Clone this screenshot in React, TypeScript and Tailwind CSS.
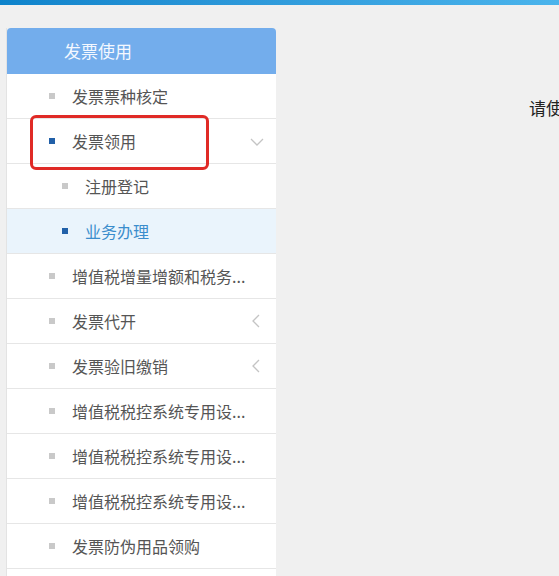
import React from "react";

type Item = {
  label: string;
  sub?: boolean;
  active?: boolean;
  selected?: boolean;
  arrow?: "down" | "left";
};

const items: Item[] = [
  { label: "发票票种核定" },
  { label: "发票领用", active: true, arrow: "down" },
  { label: "注册登记", sub: true },
  { label: "业务办理", sub: true, selected: true },
  { label: "增值税增量增额和税务..." },
  { label: "发票代开", arrow: "left" },
  { label: "发票验旧缴销", arrow: "left" },
  { label: "增值税税控系统专用设..." },
  { label: "增值税税控系统专用设..." },
  { label: "增值税税控系统专用设..." },
  { label: "发票防伪用品领购" },
];

const ChevronDown = () => (
  <svg width="14" height="8" viewBox="0 0 14 8" fill="none">
    <path d="M1 1l6 6 6-6" stroke="#c4c4c4" strokeWidth="1.3" />
  </svg>
);

const ChevronLeft = () => (
  <svg width="8" height="14" viewBox="0 0 8 14" fill="none">
    <path d="M7 1L1 7l6 6" stroke="#c4c4c4" strokeWidth="1.3" />
  </svg>
);

const MenuRow: React.FC<{ item: Item }> = ({ item }) => {
  return (
    <div
      className={`relative flex items-center h-[45px] border-b border-[#e6e6e6] ${
        item.selected ? "bg-[#eaf4fc]" : "bg-white"
      } ${item.sub ? "pl-[55px]" : "pl-[42px]"}`}
    >
      <span
        className={`w-[6px] h-[6px] shrink-0 ${
          item.active || item.selected ? "bg-[#2160a8]" : "bg-[#c9c9c9]"
        }`}
      />
      <span
        className={`ml-[17px] whitespace-nowrap text-[16px] leading-[22px] ${
          item.selected ? "text-[#3b8dcc]" : "text-[#555555]"
        }`}
      >
        {item.label}
      </span>
      {item.arrow === "down" && (
        <span className="absolute right-[12px] top-[19px] flex">
          <ChevronDown />
        </span>
      )}
      {item.arrow === "left" && (
        <span className="absolute right-[16px] top-[15px] flex">
          <ChevronLeft />
        </span>
      )}
    </div>
  );
};

export default function App() {
  return (
    <div
      className="w-[559px] h-[576px] overflow-hidden bg-[#f0f0f0]"
      style={{ fontFamily: '"Noto Sans CJK SC", "Noto Sans", sans-serif' }}
    >
      <div className="h-[5px] bg-gradient-to-r from-[#0d83cb] to-[#4ab4ec]" />
      <div className="flex pt-[23px] pl-[6px]">
        <div className="relative w-[270px] shrink-0 border-l border-[#e3e3e3]">
          <div className="h-[46px] rounded-t-[4px] bg-[#73adec] flex items-center pl-[57px] text-[17px] text-[#f4f8ff]">
            发票使用
          </div>
          {items.map((item, i) => (
            <MenuRow key={i} item={item} />
          ))}
          <div className="h-[45px] bg-white" />
          {/* red annotation box */}
          <div className="absolute left-[23px] top-[87px] w-[179px] h-[55px] border-[3px] border-[#e02a26] rounded-[6px]" />
        </div>
        <div className="pl-[253px] pt-[69px] whitespace-nowrap text-[17px] leading-[22px] text-[#222222]">
          请使
        </div>
      </div>
    </div>
  );
}
